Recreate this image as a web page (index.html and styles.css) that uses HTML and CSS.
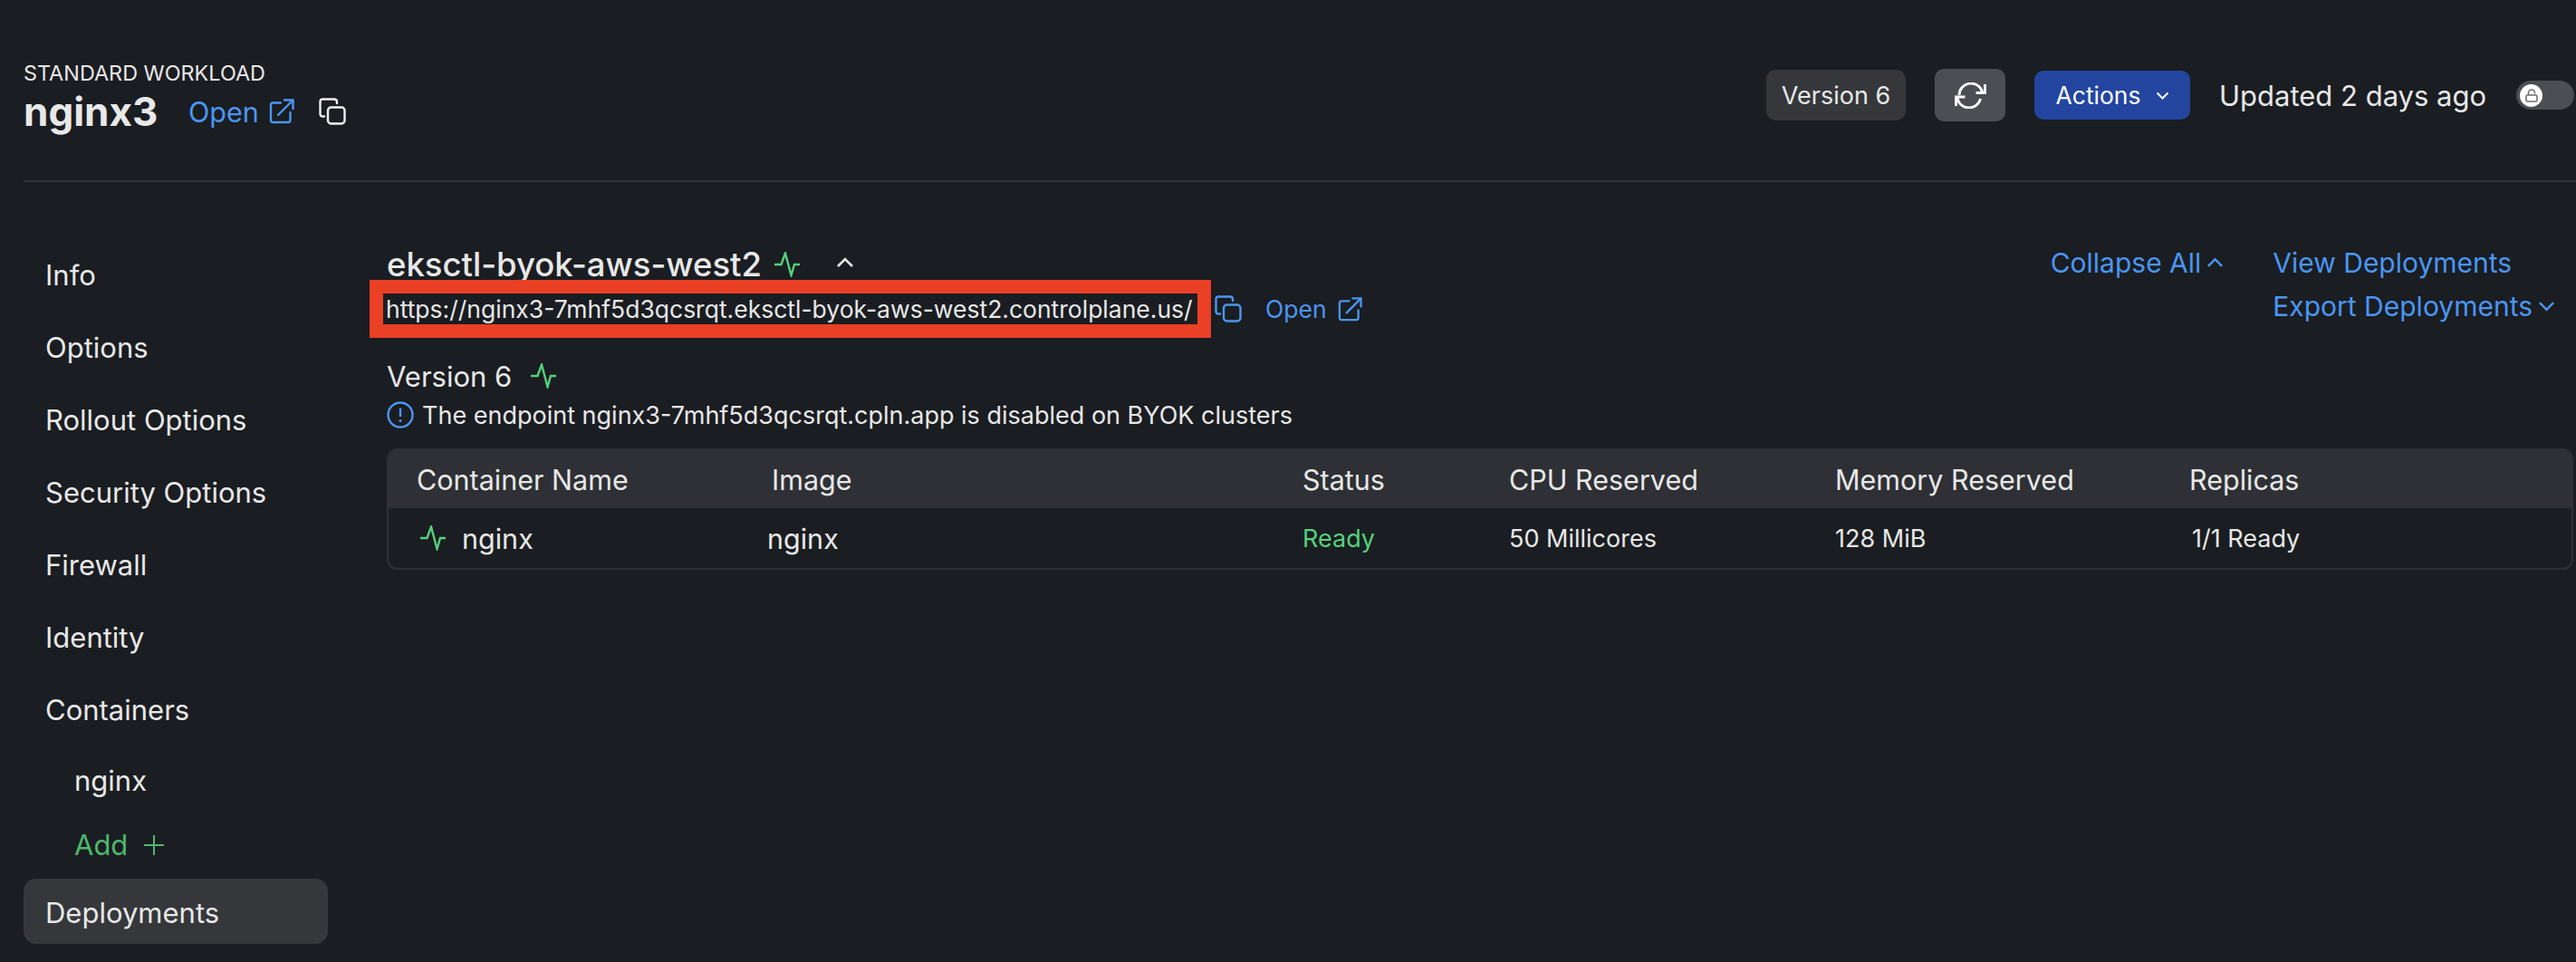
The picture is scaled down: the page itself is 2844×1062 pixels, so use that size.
FILE: index.html
```html
<!DOCTYPE html>
<html>
<head>
	<meta charset="utf-8">
	<title>nginx3 - Deployments</title>
	<link rel="stylesheet" href="styles.css">
</head>
<body>

	<svg class="icon-defs">
		<symbol id="i-pulse" viewBox="0 0 30 28">
			<path d="M1 14H8.5L13 1.5L19.5 26L23 14H29" fill="none" stroke="currentColor" stroke-width="2.4"/>
		</symbol>
		<symbol id="i-open" viewBox="0 0 28 28">
			<path d="M23.5 15V23.5Q23.500 26 21 26H4.500Q2 26 2 23.500V7Q2 4.500 4.500 4.500H13" fill="none" stroke="currentColor" stroke-width="2.400" stroke-linecap="round"/>
			<path d="M10 18L26 2M17 1.500H26.500V11" fill="none" stroke="currentColor" stroke-width="2.400" stroke-linecap="round"/>
		</symbol>
		<symbol id="i-copy" viewBox="0 0 30 30">
			<rect x="10" y="10.500" width="18.500" height="18" rx="3.500" fill="none" stroke="currentColor" stroke-width="2.400"/>
			<path d="M6 20.500H4.500Q1.500 20.500 1.500 17.500V4.500Q1.500 1.500 4.500 1.500H17Q20 1.500 20 4.500V6" fill="none" stroke="currentColor" stroke-width="2.400" stroke-linecap="round"/>
		</symbol>
		<symbol id="i-up" viewBox="0 0 20 12">
			<path d="M2 10L10 2L18 10" fill="none" stroke="currentColor" stroke-width="2.600"/>
		</symbol>
		<symbol id="i-down" viewBox="0 0 20 12">
			<path d="M2 2L10 10L18 2" fill="none" stroke="currentColor" stroke-width="2.600"/>
		</symbol>
	</svg>

	<header class="top-bar">
		<div class="title-block">
			<div class="kind-label">STANDARD WORKLOAD</div>
			<div class="name-row">
				<span class="workload-name">nginx3</span>
				<a class="link open-link">Open <svg class="icon-open"><use href="#i-open"/></svg></a>
				<svg class="icon-copy copy-white"><use href="#i-copy"/></svg>
			</div>
		</div>
		<div class="top-actions">
			<span class="version-pill">Version 6</span>
			<span class="refresh-btn">
				<svg class="icon-refresh" viewBox="0 0 35 29">
					<path d="M5 14A13 13 0 0 1 30.500 10.500M28.500 18A13 13 0 0 1 3 17" fill="none" stroke="currentColor" stroke-width="2.800"/>
					<path d="M33.500 2V11.500H23.500M1.500 26V16H11.500" fill="none" stroke="currentColor" stroke-width="2.800"/>
				</svg>
			</span>
			<span class="actions-btn">Actions <svg class="icon-small-down"><use href="#i-down"/></svg></span>
			<span class="updated">Updated 2 days ago</span>
			<span class="toggle">
				<span class="toggle-knob">
					<svg class="icon-lock" viewBox="0 0 14 15">
						<path d="M3.500 7V4.500A3.500 3.500 0 0 1 10.500 4.500V5.500" fill="none" stroke="#6b6e73" stroke-width="1.600"/>
						<rect x="1" y="7" width="12" height="7" rx="1.500" fill="none" stroke="#6b6e73" stroke-width="1.600"/>
					</svg>
				</span>
			</span>
		</div>
	</header>

	<div class="main">
		<nav class="sidebar">
			<div class="nav-item">Info</div>
			<div class="nav-item">Options</div>
			<div class="nav-item">Rollout Options</div>
			<div class="nav-item">Security Options</div>
			<div class="nav-item">Firewall</div>
			<div class="nav-item">Identity</div>
			<div class="nav-item">Containers</div>
			<div class="nav-item nav-sub">nginx</div>
			<div class="nav-item nav-add">Add <span class="plus"></span></div>
			<div class="nav-item nav-active">Deployments</div>
		</nav>

		<section class="content">
			<div class="cluster-head">
				<div class="cluster-left">
					<div class="cluster-name-row">
						<span class="cluster-name">eksctl-byok-aws-west2</span>
						<svg class="icon-pulse"><use href="#i-pulse"/></svg>
						<svg class="icon-chevron"><use href="#i-up"/></svg>
					</div>
					<div class="url-row">
						<span class="url-box">https://nginx3-7mhf5d3qcsrqt.eksctl-byok-aws-west2.controlplane.us/</span>
						<svg class="icon-copy copy-blue"><use href="#i-copy"/></svg>
						<a class="link url-open">Open <svg class="icon-open-sm"><use href="#i-open"/></svg></a>
					</div>
				</div>
				<div class="cluster-links">
					<a class="link collapse-all">Collapse All <svg class="icon-link-chev"><use href="#i-up"/></svg></a>
					<div class="deploy-links">
						<a class="link">View Deployments</a>
						<a class="link">Export Deployments <svg class="icon-link-chev"><use href="#i-down"/></svg></a>
					</div>
				</div>
			</div>

			<div class="version-row">Version 6 <svg class="icon-pulse"><use href="#i-pulse"/></svg></div>
			<div class="notice">
				<svg class="icon-info" viewBox="0 0 30 30">
					<circle cx="15" cy="15" r="13.500" fill="none" stroke="#4b96f3" stroke-width="2.400"/>
					<path d="M15 7.500V17" stroke="#4b96f3" stroke-width="2.400"/>
					<circle cx="15" cy="21.500" r="1.500" fill="#4b96f3"/>
				</svg>
				The endpoint nginx3-7mhf5d3qcsrqt.cpln.app is disabled on BYOK clusters
			</div>

			<div class="table">
				<div class="table-row table-head">
					<div>Container Name</div>
					<div>Image</div>
					<div>Status</div>
					<div>CPU Reserved</div>
					<div>Memory Reserved</div>
					<div>Replicas</div>
				</div>
				<div class="table-row table-body">
					<div class="cell-name"><svg class="icon-pulse"><use href="#i-pulse"/></svg>nginx</div>
					<div class="cell-image">nginx</div>
					<div class="cell-small cell-ready">Ready</div>
					<div class="cell-small">50 Millicores</div>
					<div class="cell-small">128 MiB</div>
					<div class="cell-small cell-replicas">1/1 Ready</div>
				</div>
			</div>
		</section>
	</div>

</body>
</html>
```

FILE: styles.css
```css
* {
	box-sizing: border-box;
}

body {
	margin: 0;
	height: 1062px;
	overflow: hidden;
	background-color: #1a1d21;
	color: #e8e8e8;
	font-family: "Inter", "Open Sans", sans-serif;
	font-size: 31px;
}

svg {
	display: block;
	flex-shrink: 0;
}

.icon-defs {
	display: none;
}

.link {
	color: #4b96f3;
	display: flex;
	align-items: center;
}

/* top bar */
.top-bar {
	display: flex;
	justify-content: space-between;
	height: 201px;
	margin-left: 26px;
	padding-right: 2px;
	border-bottom: 2px solid #33353a;
}

.title-block {
	padding-top: 67px;
}

.kind-label {
	font-size: 23.400px;
	line-height: 28px;
}

.name-row {
	display: flex;
	align-items: center;
	height: 56px;
}

.workload-name {
	font-size: 44px;
	font-weight: 700;
	width: 182px;
}

.open-link {
	font-size: 30.500px;
	gap: 11px;
}

.icon-open {
	width: 28px;
	height: 28px;
}

.icon-copy {
	width: 30px;
	height: 30px;
}

.copy-white {
	margin-left: 27px;
	color: #f0f0f0;
}

.top-actions {
	display: flex;
	align-items: center;
	gap: 32px;
	height: 58px;
	margin-top: 76px;
}

.version-pill {
	display: flex;
	align-items: center;
	justify-content: center;
	width: 154px;
	height: 56px;
	background-color: #35373b;
	border-radius: 10px;
	font-size: 27px;
}

.refresh-btn {
	display: flex;
	align-items: center;
	justify-content: center;
	width: 78px;
	height: 58px;
	background-color: #4b4e53;
	border-radius: 10px;
	color: #fff;
}

.icon-refresh {
	width: 35px;
	height: 29px;
}

.actions-btn {
	display: flex;
	align-items: center;
	justify-content: center;
	gap: 16px;
	width: 172px;
	height: 54px;
	background-color: #23459f;
	border-radius: 10px;
	color: #fff;
	font-size: 26.500px;
}

.icon-small-down {
	width: 15px;
	height: 9px;
}

.updated {
	font-size: 31px;
	width: 296px;
	white-space: nowrap;
}

.toggle {
	display: flex;
	align-items: center;
	width: 64px;
	height: 32px;
	padding-left: 4px;
	background-color: #4b4e53;
	border-radius: 16px;
}

.toggle-knob {
	display: flex;
	align-items: center;
	justify-content: center;
	width: 25px;
	height: 25px;
	background-color: #fff;
	border-radius: 50%;
}

.icon-lock {
	width: 14px;
	height: 15px;
}

/* sidebar + content */
.main {
	display: flex;
}

.sidebar {
	width: 336px;
	margin-left: 26px;
	margin-top: 61px;
}

.nav-item {
	display: flex;
	align-items: center;
	height: 80px;
	padding-top: 3px;
	padding-left: 24px;
}

.nav-sub {
	height: 76px;
	padding-left: 56px;
}

.nav-add {
	height: 66px;
	padding-left: 56px;
	color: #4fb86e;
	gap: 18px;
}

.plus {
	position: relative;
	width: 22px;
	height: 22px;
}

.plus::before,
.plus::after {
	content: "";
	position: absolute;
	background-color: #4fb86e;
}

.plus::before {
	left: 0;
	right: 0;
	top: 10px;
	height: 2px;
}

.plus::after {
	top: 0;
	bottom: 0;
	left: 10px;
	width: 2px;
}

.nav-active {
	height: 72px;
	margin-top: 6px;
	background-color: #35373b;
	border-radius: 14px;
}

.content {
	flex: 1;
	margin-left: 65px;
	margin-right: 3px;
	padding-top: 68px;
}

.cluster-head {
	display: flex;
	justify-content: space-between;
}

.cluster-name-row {
	display: flex;
	align-items: center;
	height: 40px;
	margin-top: 3px;
}

.cluster-name {
	font-size: 36.500px;
	font-weight: 500;
	line-height: 49px;
	width: 427px;
	white-space: nowrap;
}

.icon-pulse {
	width: 30px;
	height: 28px;
	color: #55d17c;
}

.icon-chevron {
	width: 20px;
	height: 12px;
	margin-left: 39px;
	margin-top: -4px;
}

.url-row {
	display: flex;
	align-items: center;
	margin-left: -19px;
	margin-top: -3px;
}

.url-box {
	display: block;
	width: 929px;
	height: 64px;
	padding-left: 3px;
	padding-top: 1px;
	border: 15px solid #ea4025;
	font-size: 26.500px;
	line-height: 32px;
	background-color: #1a1d21;
	white-space: nowrap;
}

.copy-blue {
	color: #4b96f3;
	margin-left: 4px;
}

.url-open {
	margin-left: 26px;
	font-size: 26.500px;
	gap: 12px;
}

.icon-open-sm {
	width: 27px;
	height: 27px;
}

.cluster-links {
	display: flex;
	gap: 54px;
	padding-right: 20px;
}

.deploy-links {
	display: flex;
	flex-direction: column;
	gap: 6px;
}

.collapse-all {
	align-self: flex-start;
}

.cluster-links .link {
	font-size: 30px;
	line-height: 42px;
	gap: 6px;
	white-space: nowrap;
}

.icon-link-chev {
	width: 19px;
	height: 12px;
}

.version-row {
	display: flex;
	align-items: center;
	gap: 20px;
	height: 40px;
	margin-top: 22px;
}

.notice {
	display: flex;
	align-items: center;
	gap: 9px;
	height: 36px;
	margin-top: 5px;
	font-size: 27px;
	white-space: nowrap;
}

.icon-info {
	width: 30px;
	height: 30px;
}

/* deployment table */
.table {
	margin-top: 19px;
	border: 2px solid #2e3035;
	border-radius: 12px;
	overflow: hidden;
}

.table-row {
	display: grid;
	grid-template-columns: 392px 586px 228px 360px 391px 1fr;
	align-items: center;
	padding-left: 31px;
}

.table-head {
	height: 62px;
	padding-top: 2px;
	background-color: #2e3035;
	font-size: 30.500px;
}

.table-body {
	height: 68px;
	border-top: 2px solid #2e3035;
	font-size: 30.500px;
}

.cell-name {
	display: flex;
	align-items: center;
	gap: 17px;
	padding-left: 3px;
}

.cell-image {
	margin-left: -5px;
}

.cell-small {
	font-size: 27px;
}

.cell-ready {
	color: #55d17c;
}

.cell-replicas {
	margin-left: 3px;
}
```
